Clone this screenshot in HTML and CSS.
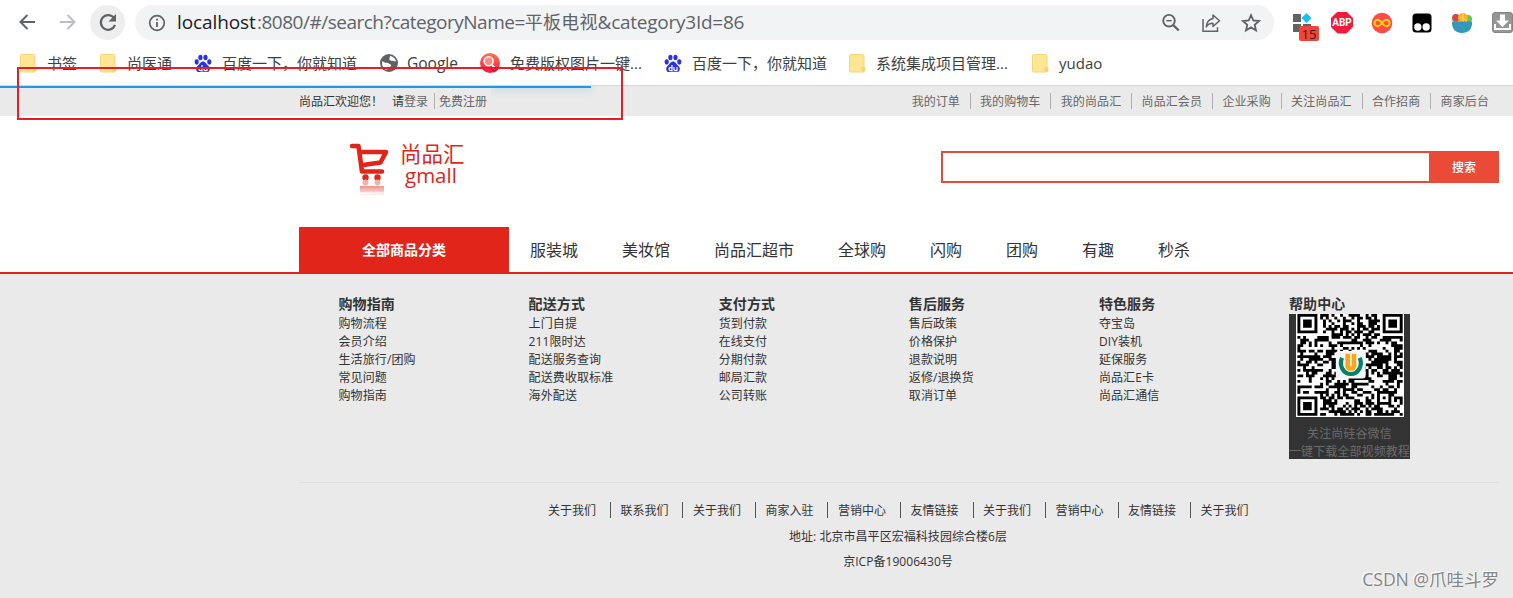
FILE: index.html
```html
<!DOCTYPE html>
<html lang="zh-CN">
<head>
<meta charset="utf-8">
<title>尚品汇</title>
<link rel="stylesheet" href="styles.css">
</head>
<body>
<svg width="0" height="0" class="defs">
  <symbol id="folder" viewBox="0 0 17 19"><path d="M1.500 .5h12q1.500 0 1.500 1.500v11l1 1v2.500q0 1.500-1.500 1.500h-13q-1 0-1-1V1.500q0-1 1-1z" fill="#ffe694" stroke="#f3d676"/><path d="M15 13v3.500q-1.800 1-2.300-1v-2" fill="#fbe07e" stroke="#f0cd58"/></symbol>
  <symbol id="baidu" viewBox="0 0 18 19"><g fill="#2932e1"><ellipse cx="2.700" cy="8" rx="2.100" ry="2.700"/><ellipse cx="6.400" cy="3.500" rx="2.100" ry="2.800"/><ellipse cx="11.500" cy="3.500" rx="2.100" ry="2.800"/><ellipse cx="15.300" cy="8" rx="2.100" ry="2.700"/><path d="M9 7.500c2.500 0 3 2.500 5 4 3 2.200 2.200 6.600-1.200 6.600-1.500 0-2-.3-3.800-.3s-2.300.3-3.800.3c-3.400 0-4.200-4.400-1.200-6.600 2-1.500 2.500-4 5-4z"/></g><g fill="none" stroke="#fff" stroke-width="1.200"><path d="M8 11v5.600H6.300q-1.300 0-1.300-1.500t1.300-1.500H8M10 13v2.300q0 1.300 1.300 1.300H13V13"/></g></symbol>
</svg>
<header class="browser">
  <div class="toolbar">
    <svg class="back" width="20" height="20" viewBox="0 0 20 20"><path d="M18 9H4M10.500 2L3.500 9l7 7" fill="none" stroke="#5f6368" stroke-width="2"/></svg>
    <svg class="forward" width="20" height="20" viewBox="0 0 20 20"><path d="M2 9h14M9.500 2l7 7-7 7" fill="none" stroke="#bbbdc0" stroke-width="2"/></svg>
    <span class="reload"><svg width="20" height="20" viewBox="0 0 20 20"><path d="M16.300 5.500A7.300 7.300 0 1 0 17 12" fill="none" stroke="#5f6368" stroke-width="2.200"/><path d="M18 1v7.500h-7.500z" fill="#5f6368"/></svg></span>
    <div class="address">
      <svg width="18" height="18" viewBox="0 0 18 18"><circle cx="9" cy="9" r="7.300" fill="none" stroke="#5f6368" stroke-width="1.700"/><path d="M9 8v5M9 4.800v1.800" stroke="#5f6368" stroke-width="1.800"/></svg>
      <div class="url"><b>localhost</b><span class="path">:8080/#/search?categoryName=</span><span class="cn">平板电视</span><span class="query">&amp;category3Id=86</span></div>
      <div class="tools">
        <svg width="20" height="20" viewBox="0 0 20 20" fill="none" stroke="#5f6368" stroke-width="1.900"><circle cx="8" cy="7.700" r="5.800"/><path d="M12.200 12l5.500 5.500" stroke-width="2.400"/><path d="M5.300 7.700h5.400" stroke-width="1.400"/></svg>
        <svg width="20" height="20" viewBox="0 0 20 20" fill="none" stroke="#5f6368" stroke-width="1.500"><path d="M2 6v12.200h14.500v-4"/><path d="M12 2l6.500 5.800L12 13.500v-3.300c-3 0-5.200 1-6.700 3.700.3-4.500 2.500-7.500 6.700-8.300z" stroke-linejoin="round"/></svg>
        <svg width="20" height="20" viewBox="0 0 20 20"><path d="M10 2.200l2.300 5.300 5.700.5-4.300 3.800 1.300 5.600-5-3-5 3 1.300-5.600L2 8l5.700-.5z" fill="none" stroke="#5f6368" stroke-width="1.800"/></svg>
      </div>
    </div>
    <div class="extensions">
      <span class="ext"><svg width="20" height="20" viewBox="0 0 20 20"><path d="M1 1h8v8H1zM1 11h8v8H1zM11 11h8v8h-8z" fill="#5f6368"/><path d="M14.500 0l5 5-5 5-5-5z" fill="#12c2fb"/></svg><span class="count">15</span></span>
      <span class="ext abp">ABP</span>
      <span class="ext"><svg width="22" height="22" viewBox="0 0 22 22"><circle cx="11" cy="11" r="10.300" fill="#ff4b4b"/><path d="M11 11C9.200 8.400 8.200 7.700 6.700 7.700a3.300 3.300 0 0 0 0 6.600C8.200 14.300 9.200 13.600 11 11s2.800-3.300 4.300-3.300a3.300 3.300 0 0 1 0 6.600C13.800 14.300 12.800 13.600 11 11z" fill="none" stroke="#ffd800" stroke-width="1.900"/></svg></span>
      <span class="ext"><svg width="20" height="20" viewBox="0 0 20 20"><rect x=".5" y=".5" width="19" height="19" rx="3.500"/><circle cx="5.800" cy="14" r="3.700" fill="#fff"/><circle cx="14.200" cy="14" r="3.700" fill="#fff"/></svg></span>
      <span class="ext"><svg width="22" height="22" viewBox="0 0 22 22"><circle cx="5" cy="6" r="4" fill="#c94e46"/><circle cx="17" cy="7" r="4" fill="#63c947"/><circle cx="12" cy="6" r="5" fill="#ffad24"/><path d="M8 4l8 5M12 1v9" stroke="#ffe06a"/><path d="M1 9.500h20q.5 11-10 11.500Q.5 20.500 1 9.500z" fill="#3398b9"/></svg></span>
      <span class="ext"><svg width="21" height="21" viewBox="0 0 21 21"><rect x=".5" y=".5" width="20" height="20" rx="2.500" fill="#969696" stroke="#858585"/><path d="M3 12v5h15v-5" fill="none" stroke="#fff" stroke-width="2"/><path d="M8 2.500h5v6h4L10.500 15 4 8.500h4z" fill="#fff"/></svg></span>
    </div>
  </div>
  <nav class="bookmarks">
    <a><svg class="fold"><use href="#folder"/></svg>书签</a>
    <a><svg class="fold"><use href="#folder"/></svg>尚医通</a>
    <a><svg class="paw"><use href="#baidu"/></svg>百度一下，你就知道</a>
    <a><svg class="globe" viewBox="0 0 18 18"><circle cx="9" cy="9" r="9" fill="#5f6368"/><path d="M2 7.500c2-.5 2.500 1.500 4.500 1.300s2.500 1.500 4 1.700.5 2.500-1.500 2.500-1 2-2.200 3C4 15 1.500 12 2 7.500zM10 2c1.500 0 5 1.500 6 5-1.500 1-2.700-.5-4-.3S8.500 5.500 9.500 4.500z" fill="#fff"/></svg><span class="google">Google</span></a>
    <a><svg class="lens" viewBox="0 0 20 20"><defs><linearGradient id="red" x2="0" y2="1"><stop stop-color="#ff754b"/><stop offset="1" stop-color="#f8174a"/></linearGradient></defs><circle cx="10" cy="10" r="10" fill="url(#red)"/><path d="M12 12l7 3q-2 4-6 4.600l-4-5z" fill="#d91745"/><circle cx="8.700" cy="8.200" r="4.500" fill="#f88" stroke="#fff" stroke-width="1.500"/><path d="M12 12l3.500 3.500" stroke="#fff" stroke-width="2"/></svg>免费版权图片一键...</a>
    <a><svg class="paw"><use href="#baidu"/></svg>百度一下，你就知道</a>
    <a><svg class="fold"><use href="#folder"/></svg>系统集成项目管理...</a>
    <a><svg class="fold"><use href="#folder"/></svg>yudao</a>
  </nav>
</header>
<div class="progress"></div>
<div class="highlight"></div>
<div class="topbar">
  <div class="container">
    <div class="welcome"><span>尚品汇欢迎您！</span><span>请<a>登录</a></span><a class="register">免费注册</a></div>
    <div class="links"><a>我的订单</a><a>我的购物车</a><a>我的尚品汇</a><a>尚品汇会员</a><a>企业采购</a><a>关注尚品汇</a><a>合作招商</a><a>商家后台</a></div>
  </div>
</div>
<div class="container masthead">
  <div class="logo">
    <svg width="42" height="56" viewBox="0 0 42 56"><defs><linearGradient id="fade" x2="0" y2="1"><stop stop-color="#e1251b" stop-opacity=".5"/><stop offset="1" stop-color="#e1251b" stop-opacity=".05"/></linearGradient></defs><path d="M3 5h6.500L13 30.500h20M13 11h24L31.500 21.500 14 24" fill="none" stroke="#e1251b" stroke-width="4.600" stroke-linecap="round" stroke-linejoin="round"/><circle cx="16.500" cy="36.500" r="3.200" fill="#e1251b"/><circle cx="28.500" cy="36.500" r="3.200" fill="#e1251b"/><circle cx="16.500" cy="41.500" r="2.900" fill="#f4b0ac"/><circle cx="28.500" cy="41.500" r="2.900" fill="#f4b0ac"/><path d="M11 45h24v6.500H11zM11 53h5l19-1v2H11z" fill="url(#fade)"/></svg>
    <div class="brand"><div class="name">尚品汇</div><div class="gmall">gmall</div></div>
  </div>
  <form class="search"><input type="text"><button type="button">搜索</button></form>
</div>
<div class="mainnav"><div class="container"><h2>全部商品分类</h2><a>服装城</a><a>美妆馆</a><a>尚品汇超市</a><a>全球购</a><a>闪购</a><a>团购</a><a>有趣</a><a>秒杀</a></div></div>
<footer>
  <div class="container">
    <div class="help">
      <div><h4>购物指南</h4><p>购物流程</p><p>会员介绍</p><p>生活旅行/团购</p><p>常见问题</p><p>购物指南</p></div>
      <div><h4>配送方式</h4><p>上门自提</p><p>211限时达</p><p>配送服务查询</p><p>配送费收取标准</p><p>海外配送</p></div>
      <div><h4>支付方式</h4><p>货到付款</p><p>在线支付</p><p>分期付款</p><p>邮局汇款</p><p>公司转账</p></div>
      <div><h4>售后服务</h4><p>售后政策</p><p>价格保护</p><p>退款说明</p><p>返修/退换货</p><p>取消订单</p></div>
      <div><h4>特色服务</h4><p>夺宝岛</p><p>DIY装机</p><p>延保服务</p><p>尚品汇E卡</p><p>尚品汇通信</p></div>
      <div><h4>帮助中心</h4><div class="wechat"><svg id="qr" width="108" height="103" viewBox="-.5 0 38 37.500" preserveAspectRatio="none"></svg><p>关注尚硅谷微信</p><p>一键下载全部视频教程</p></div></div>
    </div>
    <div class="about"><a>关于我们</a><a>联系我们</a><a>关于我们</a><a>商家入驻</a><a>营销中心</a><a>友情链接</a><a>关于我们</a><a>营销中心</a><a>友情链接</a><a>关于我们</a></div>
    <div class="legal">
      <div>地址: 北京市昌平区宏福科技园综合楼6层</div>
      <div>京ICP备19006430号</div>
    </div>
  </div>
</footer>
<div class="watermark">CSDN @爪哇斗罗</div>
<script src="qr.js"></script>
</body>
</html>
```
FILE: styles.css
```css
* { box-sizing: border-box; }
body { margin: 0; height: 598px; overflow: hidden; background: #fff; color: #333; font: 12px/18px "Open Sans", "Noto Sans CJK SC", sans-serif; }
h2, h4, p { margin: 0; }
svg { flex: none; display: block; }
.defs { position: absolute; }
.browser { height: 86px; border-bottom: 1px solid #d5d7d9; }
.toolbar { display: flex; align-items: center; height: 45px; padding-left: 17px; }
.forward { margin-left: 21px; }
.reload { width: 35px; height: 35px; margin: 0 10px 0 12px; border-radius: 50%; background: #eee; display: grid; place-items: center; flex: none; }
.address { width: 1139px; flex: none; height: 35px; border-radius: 18px; background: #f1f3f4; display: flex; align-items: center; padding: 0 13px; }
.url { display: flex; margin-left: 11px; padding-bottom: 1px; font-size: 19px; line-height: 30px; color: #5f6368; white-space: nowrap; }
.url b { font-weight: 400; color: #202124; width: 80px; letter-spacing: -.1px; }
.path { letter-spacing: -.5px; }
.cn { font-size: 18px; letter-spacing: .2px; }
.query { letter-spacing: -.25px; }
.tools { display: flex; gap: 20px; margin-left: auto; }
.extensions { display: flex; margin-left: 17px; }
.ext { width: 22px; height: 22px; margin-right: 18px; flex: none; display: grid; place-items: center; position: relative; }
.count { position: absolute; left: 8px; top: 14px; width: 20px; height: 15px; border-radius: 2px; background: #f44336; color: #222; font-size: 13px; line-height: 16px; text-align: center; }
.abp { background: #f21b3d; clip-path: polygon(30% 0, 70% 0, 100% 30%, 100% 70%, 70% 100%, 30% 100%, 0 70%, 0 30%); color: #fff; font: 700 10px/18px Roboto, sans-serif; }
.bookmarks { display: grid; grid-template-columns: 80px 94px 186px 100px 184px 185px 183px 100px; padding: 6px 0 0 20px; font-size: 15px; line-height: 24px; color: #3c4043; }
.bookmarks a { display: flex; align-items: center; white-space: nowrap; }
.google { font-size: 15.500px; }
.fold { width: 17px; height: 19px; margin-right: 10px; }
.paw { width: 18px; height: 19px; margin-right: 10px; }
.globe { width: 18px; height: 18px; margin-right: 9px; }
.lens { width: 20px; height: 20px; margin-right: 10px; }
.progress { position: absolute; left: 0; top: 86px; width: 591px; height: 2px; background: linear-gradient(#29d, #29d); }
.progress::after { content: ""; position: absolute; right: 0; top: 0; width: 100px; height: 2px; box-shadow: 0 0 8px #29d; opacity: .6; clip-path: inset(0 -10px -12px 0); }
.highlight { position: absolute; left: 17px; top: 67px; width: 606px; height: 53px; border: 2px solid #ed1c24; }
.container { width: 1200px; margin-left: 299px; }
.topbar { height: 30px; background: #eaeaea; }
.topbar .container { display: flex; justify-content: space-between; padding-top: 7px; }
.topbar a { color: #666; }
.welcome { display: flex; }
.welcome span:first-child { width: 93px; }
.register, .links a + a { border-left: 1px solid #b3aeae; }
.register, .links a { height: 16px; line-height: 18px; }
.register { margin-left: 6px; padding-left: 4px; }
.links { display: flex; }
.links a { padding: 0 10px; }
.links a + a { padding-left: 9.300px; letter-spacing: .1px; }
.masthead { height: 111px; display: flex; justify-content: space-between; }
.logo { display: flex; padding: 25px 0 0 50px; color: #e1251b; }
.brand { margin-left: 9px; }
.name { font-size: 21.500px; line-height: 26px; }
.gmall { font-size: 20.500px; line-height: 28px; margin-top: -6px; padding-left: 5px; }
.search { display: flex; width: 558px; height: 32px; margin-top: 35px; }
.search input { width: 488px; border: 2px solid #ea4a36; padding: 0; border-right: 0; }
.search button { flex: 1; border: 0; background: #ea4a36; color: #fff; padding: 0 0 2px; font: 500 12px "Noto Sans CJK SC", sans-serif; }
.mainnav { height: 47px; border-bottom: 2px solid #e1251b; }
.mainnav .container { display: flex; font-size: 16px; line-height: 46px; }
.mainnav h2 { width: 210px; height: 45px; line-height: 45px; background: #e1251b; color: #fff; text-align: center; font-size: 14px; }
.mainnav a { margin: 0 22px; }
.mainnav h2 + a { margin-left: 21px; }
footer { height: 324px; background: #eaeaea; padding-top: 20px; }
.help { display: grid; grid-template-columns: repeat(6, 190.100px); padding-left: 39.500px; height: 189px; width: 1200px; border-bottom: 1px solid #e0e0e0; letter-spacing: .1px; }
h4 { font-size: 14px; line-height: 20px; padding-bottom: 1px; }
.wechat { width: 121px; height: 145px; margin-top: -1px; background: #333; color: #6c6c6c; text-align: center; white-space: nowrap; }
.wechat svg { margin: 0 auto 8px 7px; background: #fff; }
.about { display: flex; justify-content: center; padding: 19px 2px 0 0; }
.about a { height: 16px; line-height: 17px; padding: 0 14px 0 9.500px; }
.about a + a { border-left: 1px solid #555; }
.about a:last-child { padding-right: 9px; }
.legal { padding: 6px 2px 0 0; text-align: center; line-height: 25px; letter-spacing: .05px; }
.watermark { position: absolute; right: 14px; top: 567px; font-size: 17.500px; line-height: 25px; color: #858585; text-shadow: -1px -1px 0 #fff; }
```
FILE: qr.js
```javascript
const size = 37;
const finderModule = (x, y) => {
  const ring = Math.max(Math.abs(x - 3), Math.abs(y - 3));
  return ring === 3 || ring < 2;
};
let seed = 8371;
let d = '';
for (let y = 0; y < size; y++) {
  for (let x = 0; x < size; x++) {
    seed = (seed * 48271) % 2147483647;
    let dark = (seed >> 8) % 100 < 52;
    const left = x < 8, right = x > 28, top = y < 8, bottom = y > 28;
    if ((left || right) && top || left && bottom) {
      const fx = right ? x - 30 : x;
      const fy = bottom ? y - 30 : y;
      dark = fx >= 0 && fx < 7 && fy >= 0 && fy < 7 && finderModule(fx, fy);
    }
    if (x >= 28 && x <= 32 && y >= 28 && y <= 32) {
      dark = Math.max(Math.abs(x - 30), Math.abs(y - 30)) !== 1;
    }
    if (dark) d += `M${x} ${y}h1.03v1.03h-1.03z`;
  }
}
document.getElementById('qr').innerHTML = `<path d="${d}" fill="#000"/>
<rect x="13.5" y="13.500" width="10.500" height="10" rx="1" fill="#f5f5f5"/>
<path d="M15.700 16a3.500 4 0 1 0 6.200 0" fill="none" stroke="#087f68" stroke-width="1.500"/>
<path d="M16.900 14.500h3.800v4.500q-.2 1.700-1.900 1.700t-1.900-1.700z" fill="#f8a51b"/>
<path d="M18.800 14.500v4.500" stroke="#fff" stroke-width=".5"/>`;
```
